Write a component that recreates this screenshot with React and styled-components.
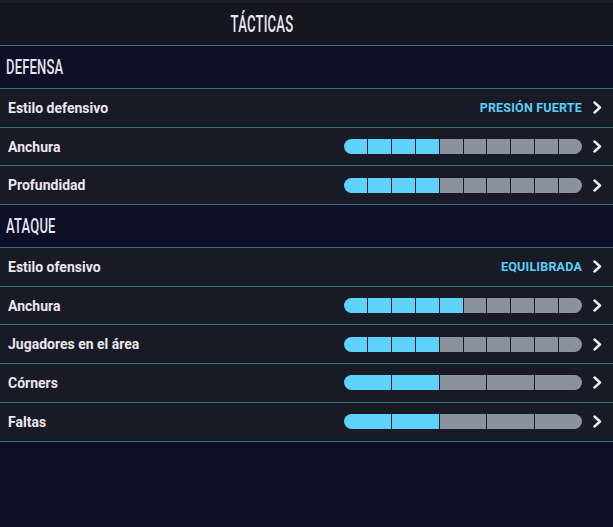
import React from 'react';
import styled, { createGlobalStyle } from 'styled-components';

const GlobalStyle = createGlobalStyle`
  html, body {
    margin: 0;
    padding: 0;
    background: #0c0f25;
  }
  * { box-sizing: border-box; }
`;

const Page = styled.div`
  min-height: 100vh;
  background: #0c0f25;
  font-family: Roboto, "Noto Sans", sans-serif;
  color: #ebe6ef;
`;

const TopStrip = styled.div`
  height: 3px;
  background: #1e1f26;
`;

const TitleBar = styled.div`
  height: 43px;
  display: flex;
  align-items: center;
  justify-content: center;
  padding-right: 90px;
  background: #15161f;
  border-bottom: 1px solid #3d6b7c;
`;

const Condensed = styled.span`
  display: inline-block;
  font-weight: 500;
  font-size: ${(p) => p.$size}px;
  transform: scaleX(${(p) => p.$scale});
  transform-origin: ${(p) => p.$origin};
  letter-spacing: 0.3px;
  color: #e9e5ee;
`;

const SectionHeader = styled.div`
  height: 43px;
  display: flex;
  align-items: center;
  padding-left: 6px;
  background: #0c0f27;
  border-bottom: 1px solid #3d6b7c;
`;

const Row = styled.div`
  height: 38.7px;
  display: flex;
  align-items: center;
  padding: 0 11px 0 8px;
  background: #181a25;
  border-bottom: 1px solid #3d6b7c;
`;

const Label = styled.div`
  flex: 1;
  font-size: 14px;
  font-weight: 700;
  color: #ebe6ef;
`;

const Value = styled.div`
  font-size: 12.5px;
  font-weight: 700;
  color: #5ccff7;
  letter-spacing: 0.2px;
`;

const Bar = styled.div`
  width: 238px;
  height: 15px;
  display: flex;
  gap: 1px;
  border-radius: 8px;
  overflow: hidden;
  background: #181a25;
`;

const Segment = styled.div`
  flex: 1;
  background: ${(p) => (p.$on ? '#5fd2fa' : '#8a929d')};
`;

const Chevron = styled.svg`
  margin-left: 11px;
  flex-shrink: 0;
`;

const Arrow = () => (
  <Chevron width="9" height="13" viewBox="0 0 9 13">
    <polyline
      points="1.5,1.5 7,6.5 1.5,11.5"
      fill="none"
      stroke="#f1ecf3"
      strokeWidth="2.4"
      strokeLinecap="round"
      strokeLinejoin="round"
    />
  </Chevron>
);

const sections = [
  {
    title: 'DEFENSA',
    rows: [
      { label: 'Estilo defensivo', value: 'PRESIÓN FUERTE' },
      { label: 'Anchura', total: 10, on: 4 },
      { label: 'Profundidad', total: 10, on: 4 },
    ],
  },
  {
    title: 'ATAQUE',
    rows: [
      { label: 'Estilo ofensivo', value: 'EQUILIBRADA' },
      { label: 'Anchura', total: 10, on: 5 },
      { label: 'Jugadores en el área', total: 10, on: 4 },
      { label: 'Córners', total: 5, on: 2 },
      { label: 'Faltas', total: 5, on: 2 },
    ],
  },
];

const TacticRow = ({ row }) => (
  <Row>
    <Label>{row.label}</Label>
    {row.value ? (
      <Value>{row.value}</Value>
    ) : (
      <Bar>
        {Array.from({ length: row.total }).map((_, i) => (
          <Segment key={i} $on={i < row.on} />
        ))}
      </Bar>
    )}
    <Arrow />
  </Row>
);

const App = () => (
  <Page>
    <GlobalStyle />
    <TopStrip />
    <TitleBar>
      <Condensed $size={23} $scale={0.57} $origin="center">TÁCTICAS</Condensed>
    </TitleBar>
    {sections.map((section) => (
      <React.Fragment key={section.title}>
        <SectionHeader>
          <Condensed $size={20} $scale={0.65} $origin="left">{section.title}</Condensed>
        </SectionHeader>
        {section.rows.map((row, i) => (
          <TacticRow key={i} row={row} />
        ))}
      </React.Fragment>
    ))}
  </Page>
);

export default App;
